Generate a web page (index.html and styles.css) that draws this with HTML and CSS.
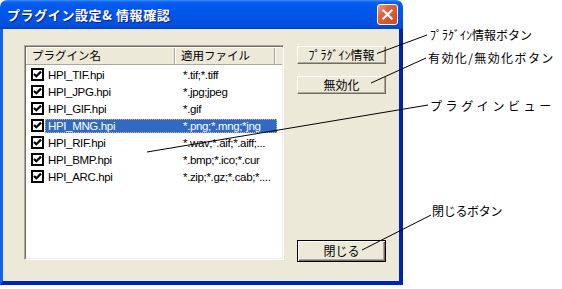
FILE: index.html
```html
<!DOCTYPE html>
<html lang="ja">
<head>
  <meta charset="UTF-8" />
  <title>プラグイン設定& 情報確認</title>
  <link rel="stylesheet" href="styles.css">
</head>

<body>
  <div class="canvas">
    <div class="window">
      <div class="titlebar">
        <span class="title">プラグイン設定&amp; 情報確認</span>
        <span class="close">
          <svg width="21" height="21" viewBox="0 0 21 21">
            <path d="M6 6 L15 15 M15 6 L6 15" stroke="#fff" stroke-width="2.4" stroke-linecap="square"/>
          </svg>
        </span>
      </div>

      <div class="client">
        <!-- plugin list view -->
        <div class="listview">
          <div class="lv-header">
            <div class="col col-name">プラグイン名</div>
            <div class="col col-ext">適用ファイル</div>
            <div class="col col-rest"></div>
          </div>
          <ul class="lv-rows" id="rows"></ul>
        </div>

        <div class="buttons">
          <button class="btn">ﾌﾟﾗｸﾞｲﾝ情報</button>
          <button class="btn btn-second">無効化</button>
          <button class="btn btn-default">閉じる</button>
        </div>
      </div>
    </div>

    <!-- callouts -->
    <div class="note note-info">ﾌﾟﾗｸﾞｲﾝ情報ボタン</div>
    <div class="note note-toggle">有効化/無効化ボタン</div>
    <div class="note note-view">プラグインビュー</div>
    <div class="note note-close">閉じるボタン</div>

    <svg class="leaders" width="562" height="289" viewBox="0 0 562 289">
      <line x1="427" y1="35" x2="377" y2="53.5"/>
      <line x1="426" y1="58" x2="371" y2="83"/>
      <line x1="428" y1="105" x2="147" y2="152"/>
      <line x1="431" y1="215" x2="362" y2="250"/>
    </svg>
  </div>

  <script>
    const plugins = [
      { name: "HPI_TIF.hpi", ext: "*.tif;*.tiff" },
      { name: "HPI_JPG.hpi", ext: "*.jpg;jpeg" },
      { name: "HPI_GIF.hpi", ext: "*.gif" },
      { name: "HPI_MNG.hpi", ext: "*.png;*.mng;*jng", selected: true },
      { name: "HPI_RIF.hpi", ext: "*.wav;*.aif;*.aiff;..." },
      { name: "HPI_BMP.hpi", ext: "*.bmp;*.ico;*.cur" },
      { name: "HPI_ARC.hpi", ext: "*.zip;*.gz;*.cab;*...." }
    ];

    const checkSvg =
      '<svg width="9" height="9" viewBox="0 0 9 9">' +
      '<path d="M1 4 L3.3 6.3 L8 1.6" fill="none" stroke="#000" stroke-width="2.2"/></svg>';

    const rows = document.getElementById('rows');
    plugins.forEach(p => {
      const li = document.createElement('li');
      li.className = 'lv-row';
      li.innerHTML =
        '<span class="check">' + checkSvg + '</span>' +
        '<span class="cells' + (p.selected ? ' selected' : '') + '">' +
        '<span class="name">' + p.name + '</span>' +
        '<span class="ext">' + p.ext + '</span></span>';
      rows.appendChild(li);
    });
  </script>
</body>
</html>
```

FILE: styles.css
```css
:root {
  --face: #ece9d8;
  --shadow: #aca899;
  --dark-shadow: #716f64;
  --highlight: #ffffff;
  --select: #316ac5;
  --ui-font: "Liberation Sans", "Noto Sans CJK JP", sans-serif;
  --jp-font: "Noto Sans CJK JP", sans-serif;
}

body {
  margin: 0;
  background: #fff;
}

.canvas {
  position: relative;
  width: 562px;
  height: 289px;
  overflow: hidden;
}

/* Window frame */
.window {
  width: 403px;
  height: 285px;
  display: flex;
  flex-direction: column;
}

.titlebar {
  height: 29px;
  flex: none;
  display: flex;
  align-items: center;
  padding: 0 5px 0 7px;
  border-radius: 7px 7px 0 0;
  background: linear-gradient(to bottom, #3d8ef8 0%, #0a5ff0 8%, #0058ee 25%, #0055e5 60%, #0050dc 88%, #0043c4 100%);
}

.title {
  flex: 1;
  color: #fff;
  font-family: var(--jp-font);
  font-weight: 700;
  font-size: 13px;
  letter-spacing: 0.6px;
  text-shadow: 1px 1px 0 #0a1a8a;
  line-height: 16px;
}

.close {
  width: 19px;
  height: 19px;
  border: 1px solid #fff;
  border-radius: 3px;
  background: linear-gradient(135deg, #f0a080 0%, #e2603c 35%, #d6481e 100%);
  display: flex;
  align-items: center;
  justify-content: center;
}

.close svg {
  width: 19px;
  height: 19px;
}

.client {
  flex: 1;
  display: flex;
  align-items: flex-start;
  padding: 16px 0 0 21px;
  background: var(--face);
  border-left: 3px solid #1462f0;
  border-right: 4px solid #0022b0;
  border-bottom: 4px solid #0024b8;
}

/* List view */
.listview {
  width: 256px;
  height: 211px;
  background: #fff;
  border: 1px solid;
  border-color: var(--shadow) var(--highlight) var(--highlight) var(--shadow);
  box-shadow: inset 1px 1px 0 var(--dark-shadow), inset -1px -1px 0 #f1efe2;
  padding: 1px;
  font-family: var(--ui-font);
  font-size: 11.5px;
}

.lv-header {
  display: flex;
  height: 17px;
  border-bottom: 1px solid var(--shadow);
}

.col {
  background: var(--face);
  box-shadow: inset 1px 1px 0 #fff, inset -1px 0 0 var(--shadow);
  padding-left: 6px;
  line-height: 17px;
  font-family: var(--jp-font);
  font-size: 11.5px;
  color: #000;
}

.col-name {
  width: 143px;
}

.col-ext {
  width: 94px;
}

.col-rest {
  flex: 1;
  padding: 0;
  box-shadow: inset 1px 1px 0 #fff;
}

.lv-rows {
  list-style: none;
  margin: 0;
  padding: 1px 0 0 0;
}

.lv-row {
  height: 17px;
  display: flex;
  align-items: center;
  padding-left: 5px;
  color: #000;
}

.check {
  width: 9px;
  height: 9px;
  border: 2px solid #000;
  background: #fff;
  display: flex;
}

.cells {
  display: flex;
  height: 14px;
  line-height: 14px;
  margin-left: 1px;
  letter-spacing: -0.35px;
}

.cells.selected {
  background: var(--select);
  color: #fff;
  outline: 1px dotted #d8b060;
  outline-offset: -1px;
}

.name {
  width: 128px;
  padding-left: 3px;
}

.ext {
  width: 94px;
  padding-left: 7px;
  white-space: nowrap;
}

/* Buttons */
.buttons {
  display: flex;
  flex-direction: column;
  margin: 1px 0 0 13px;
  width: 89px;
  height: 216px;
}

.btn {
  height: 18px;
  padding: 0;
  margin: 0;
  background: var(--face);
  border: 1px solid;
  border-color: #fff var(--dark-shadow) var(--dark-shadow) #fff;
  box-shadow: inset -1px -1px 0 var(--shadow);
  font-family: var(--jp-font);
  font-size: 12px;
  line-height: 14px;
  color: #000;
}

.btn-second {
  margin-top: 12px;
}

.btn-default {
  margin-top: auto;
  height: 22px;
  border: 1px solid #000;
  box-shadow: inset 1px 1px 0 #fff, inset -1px -1px 0 var(--dark-shadow), inset -2px -2px 0 var(--shadow);
}

/* Callout labels */
.note {
  position: absolute;
  font-family: var(--jp-font);
  font-size: 12px;
  line-height: 14px;
  color: #000;
  white-space: nowrap;
}

.note-info {
  left: 430px;
  top: 28px;
}

.note-toggle {
  left: 428px;
  top: 51px;
  letter-spacing: 1.4px;
}

.note-view {
  left: 430px;
  top: 99px;
  letter-spacing: 3.6px;
}

.note-close {
  left: 432px;
  top: 204px;
  letter-spacing: -0.3px;
}

.leaders {
  position: absolute;
  left: 0;
  top: 0;
  pointer-events: none;
}

.leaders line {
  stroke: #000;
  stroke-width: 1;
}
```
